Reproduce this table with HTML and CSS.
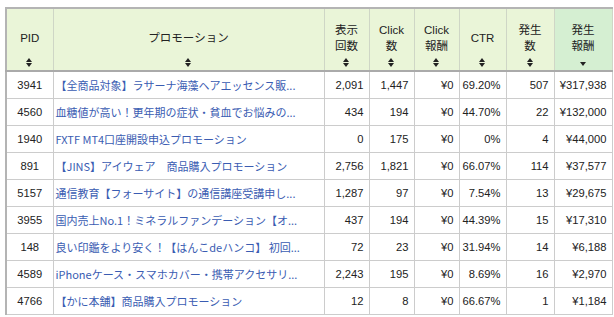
FILE: index.html
```html
<!DOCTYPE html>
<html lang="ja">
<head>
<meta charset="utf-8">
<link rel="stylesheet" href="styles.css">
</head>
<body>
<table class="report">
  <colgroup>
    <col class="c-pid"><col class="c-promo"><col class="c-n"><col class="c-n"><col class="c-n"><col class="c-ctr"><col class="c-cnt"><col class="c-rew">
  </colgroup>
  <thead>
    <tr>
      <th><div class="hd"><span class="lbl">PID</span><span class="sort both"></span></div></th>
      <th><div class="hd"><span class="lbl">プロモーション</span><span class="sort both"></span></div></th>
      <th><div class="hd"><span class="lbl">表示<br>回数</span><span class="sort both"></span></div></th>
      <th><div class="hd"><span class="lbl">Click<br>数</span><span class="sort both"></span></div></th>
      <th><div class="hd"><span class="lbl">Click<br>報酬</span><span class="sort both"></span></div></th>
      <th><div class="hd"><span class="lbl">CTR</span><span class="sort both"></span></div></th>
      <th><div class="hd"><span class="lbl">発生<br>数</span><span class="sort both"></span></div></th>
      <th class="sorted"><div class="hd"><span class="lbl">発生<br>報酬</span><span class="sort down"></span></div></th>
    </tr>
  </thead>
  <tbody>
    <tr><td class="pid">3941</td><td class="promo"><a>【全商品対象】ラサーナ海藻ヘアエッセンス販...</a></td><td>2,091</td><td>1,447</td><td>¥0</td><td>69.20%</td><td>507</td><td>¥317,938</td></tr>
    <tr><td class="pid">4560</td><td class="promo"><a>血糖値が高い！更年期の症状・貧血でお悩みの...</a></td><td>434</td><td>194</td><td>¥0</td><td>44.70%</td><td>22</td><td>¥132,000</td></tr>
    <tr><td class="pid">1940</td><td class="promo"><a>FXTF MT4口座開設申込プロモーション</a></td><td>0</td><td>175</td><td>¥0</td><td>0%</td><td>4</td><td>¥44,000</td></tr>
    <tr><td class="pid">891</td><td class="promo"><a>【JINS】アイウェア　商品購入プロモーション</a></td><td>2,756</td><td>1,821</td><td>¥0</td><td>66.07%</td><td>114</td><td>¥37,577</td></tr>
    <tr><td class="pid">5157</td><td class="promo"><a>通信教育【フォーサイト】の通信講座受講申し...</a></td><td>1,287</td><td>97</td><td>¥0</td><td>7.54%</td><td>13</td><td>¥29,675</td></tr>
    <tr><td class="pid">3955</td><td class="promo"><a>国内売上No.1！ミネラルファンデーション【オ...</a></td><td>437</td><td>194</td><td>¥0</td><td>44.39%</td><td>15</td><td>¥17,310</td></tr>
    <tr><td class="pid">148</td><td class="promo"><a>良い印鑑をより安く！【はんこdeハンコ】 初回...</a></td><td>72</td><td>23</td><td>¥0</td><td>31.94%</td><td>14</td><td>¥6,188</td></tr>
    <tr><td class="pid">4589</td><td class="promo"><a>iPhoneケース・スマホカバー・携帯アクセサリ...</a></td><td>2,243</td><td>195</td><td>¥0</td><td>8.69%</td><td>16</td><td>¥2,970</td></tr>
    <tr><td class="pid">4766</td><td class="promo"><a>【かに本舗】商品購入プロモーション</a></td><td>12</td><td>8</td><td>¥0</td><td>66.67%</td><td>1</td><td>¥1,184</td></tr>
  </tbody>
</table>
</body>
</html>
```

FILE: styles.css
```css
html, body {
  margin: 0;
  padding: 0;
  background: #ffffff;
}
body {
  padding: 7px 0 0 5px;
  font-family: "Liberation Sans", Arial, "Noto Sans CJK JP", sans-serif;
  font-size: 11px;
  color: #222222;
}
.report {
  border-collapse: collapse;
  table-layout: fixed;
  width: 606px;
  border-top: 2px solid #b4b4b4;
  border-left: 2px solid #b4b4b4;
}
.c-pid { width: 47px; }
.c-promo { width: 271px; }
.c-n { width: 45px; }
.c-ctr { width: 47px; }
.c-cnt { width: 48px; }
.c-rew { width: 58px; }

.report th {
  background: #eaf5d8;
  border: 1px solid #cfd6c6;
  border-top: 0;
  border-bottom: 2px solid #aaaaaa;
  height: 61px;
  padding: 0;
  font-weight: normal;
  font-size: 11.5px;
  line-height: 16px;
  color: #222222;
  vertical-align: top;
}
.report th.sorted {
  background: #d5efd2;
}
.hd {
  display: flex;
  flex-direction: column;
  align-items: center;
  height: 61px;
}
.hd .lbl {
  display: flex;
  align-items: center;
  justify-content: center;
  text-align: center;
  margin-top: 12px;
  height: 34px;
}
.sort {
  display: block;
  margin-top: 3px;
  width: 7px;
  height: 9px;
  position: relative;
}
.sort.both::before,
.sort.both::after,
.sort.down::after {
  content: "";
  position: absolute;
  left: 0;
  width: 0;
  height: 0;
  border-left: 3.5px solid transparent;
  border-right: 3.5px solid transparent;
}
.sort.both::before {
  top: 0;
  border-bottom: 4px solid #222;
}
.sort.both::after {
  top: 5px;
  border-top: 4px solid #222;
}
.sort.down::after {
  top: 4px;
  border-top: 4px solid #222;
}

.report td {
  border: 1px solid #cccccc;
  height: 26px;
  padding: 0 5px 0 0;
  text-align: right;
  white-space: nowrap;
  overflow: hidden;
  font-size: 11.2px;
}
.report td.pid {
  text-align: center;
  padding: 0;
}
.report td.promo {
  text-align: left;
  padding: 0 0 0 2px;
}
.report td.promo a {
  color: #3a5cb2;
  text-decoration: none;
  font-family: "Noto Sans CJK JP", sans-serif;
  font-size: 11px;
  letter-spacing: 0;
}
```
